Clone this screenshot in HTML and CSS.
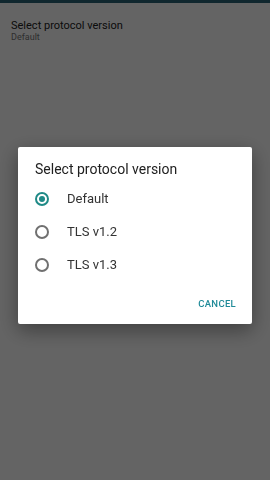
FILE: index.html
```html
<!DOCTYPE html>
<html lang="en">
<head>
    <meta charset="UTF-8">
    <meta name="viewport" content="width=device-width, initial-scale=1.0">
    <title>Protocol</title>
    <link rel="stylesheet" href="styles.css">
</head>
<body>
    <div class="pref-item">
        <div class="pref-title">Select protocol version</div>
        <div class="pref-summary">Default</div>
    </div>

    <div class="scrim">
        <div class="dialog">
            <div class="dialog-title">Select protocol version</div>
            <label class="option">
                <span class="radio checked"></span>
                <span class="option-text">Default</span>
            </label>
            <label class="option">
                <span class="radio"></span>
                <span class="option-text">TLS v1.2</span>
            </label>
            <label class="option">
                <span class="radio"></span>
                <span class="option-text">TLS v1.3</span>
            </label>
            <div class="dialog-actions">
                <button class="text-btn">Cancel</button>
            </div>
        </div>
    </div>
</body>
</html>
```

FILE: styles.css
```css
* {
    margin: 0;
    padding: 0;
    box-sizing: border-box;
}

body {
    font-family: Roboto, 'Noto Sans', sans-serif;
    background: #fafafa;
    border-top: 3px solid #2a6273;
    min-height: 100vh;
    position: relative;
}

.pref-item {
    padding: 16px 11px;
}

.pref-title {
    font-size: 11px;
    line-height: 13px;
    color: #212121;
}

.pref-summary {
    font-size: 9px;
    line-height: 11px;
    color: #757575;
}

.scrim {
    position: fixed;
    top: 0;
    left: 0;
    right: 0;
    bottom: 0;
    background: rgba(0,0,0,0.6);
    padding-top: 147px;
    padding-left: 18px;
}

.dialog {
    width: 234px;
    background: white;
    border-radius: 2px;
    box-shadow: 0 6px 20px rgba(0,0,0,0.4);
    padding: 12px 0 3px;
}

.dialog-title {
    font-size: 14px;
    line-height: 20px;
    color: #212121;
    padding: 0 17px;
    margin-bottom: 3px;
}

.option {
    display: flex;
    align-items: center;
    height: 33px;
    padding-left: 17px;
}

.radio {
    width: 14px;
    height: 14px;
    border: 2px solid #707070;
    border-radius: 50%;
    display: flex;
    align-items: center;
    justify-content: center;
}

.radio.checked {
    border-color: #1f8a87;
}

.radio.checked::after {
    content: '';
    width: 6px;
    height: 6px;
    border-radius: 50%;
    background: #1f8a87;
}

.option-text {
    margin-left: 18px;
    font-size: 13px;
    color: #333;
}

.dialog-actions {
    display: flex;
    justify-content: flex-end;
    margin-top: 4px;
    padding-right: 10px;
}

.text-btn {
    background: transparent;
    border: none;
    font-family: Roboto, 'Noto Sans', sans-serif;
    font-size: 9.5px;
    font-weight: 500;
    text-transform: uppercase;
    letter-spacing: 0.3px;
    color: #1f8a98;
    height: 36px;
    padding: 0 6px;
}
```
